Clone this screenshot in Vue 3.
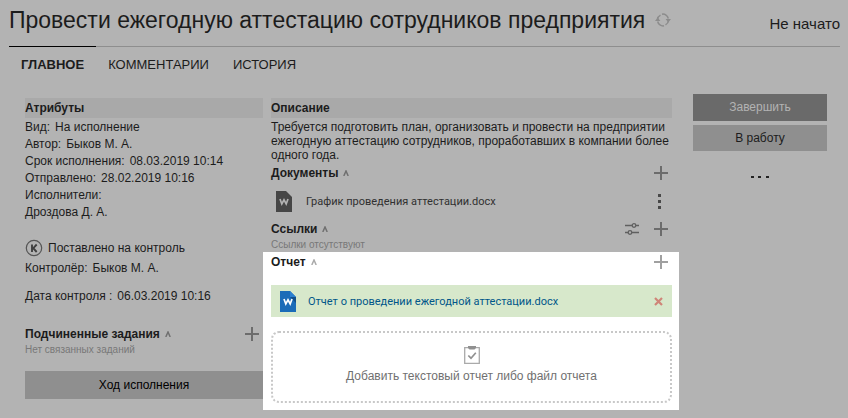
<script setup>
import { ref } from 'vue'

const tabs = ['Главное', 'Комментарии', 'История']
const active = ref(0)
const attributes = [
  ['Вид:', 'На исполнение'],
  ['Автор:', 'Быков М. А.'],
  ['Срок исполнения:', '08.03.2019 10:14'],
  ['Отправлено:', '28.02.2019 10:16'],
  ['Исполнители:', ''],
]
</script>

<template>
  <div class="page">
    <header class="top">
      <h1>Провести ежегодную аттестацию сотрудников предприятия</h1>
      <button class="icon refresh" type="button" aria-label="Обновить">
        <svg width="16" height="14" viewBox="0 0 16 14" fill="none" stroke="#8c8c8c" stroke-width="1.500">
          <path d="M2.500 6.500a5.500 5.500 0 0 1 3-4.400M7 1.200a5.500 5.500 0 0 1 6.300 4.300M13.500 7.500a5.500 5.500 0 0 1-3 4.400M9 12.800a5.500 5.500 0 0 1-6.300-4.300" />
          <path d="M0 8l2.700-3.500L5.400 8zM10.600 6l2.700 3.500L16 6z" fill="#8c8c8c" stroke="none" />
        </svg>
      </button>
      <span class="status">Не начато</span>
    </header>

    <nav class="tabs">
      <button
        v-for="(tab, i) in tabs"
        :key="tab"
        type="button"
        :class="['tab', { active: i === active }]"
        @click="active = i"
      >{{ tab }}</button>
    </nav>

    <main class="columns">
      <section class="left">
        <h2 class="band">Атрибуты</h2>
        <div class="attributes">
          <p v-for="[name, value] in attributes" :key="name"><span>{{ name }}</span><span>{{ value }}</span></p>
          <p>Дроздова Д. А.</p>
        </div>
        <p class="control">
          <svg width="18" height="18" viewBox="0 0 18 18" fill="none" stroke="#555">
            <circle cx="9" cy="9" r="7.700" stroke-width="1.200" />
            <path d="M7 5.500v7.500M11.700 5.500L8.300 9.200l3.400 3.800" stroke="#404040" stroke-width="1.900" />
          </svg>
          Поставлено на контроль
        </p>
        <p class="line"><span>Контролёр:</span><span>Быков М. А.</span></p>
        <p class="line date"><span>Дата контроля :</span><span>06.03.2019 10:16</span></p>
        <div class="section-head tasks">
          <h2>Подчиненные задания</h2>
          <svg class="caret" width="6" height="6" viewBox="0 0 6 6"><path d="M.8 6L3 1 5.200 6" /></svg>
          <button class="icon plus" type="button" aria-label="Добавить задание">
            <svg width="14" height="14" viewBox="0 0 14 14"><path d="M7 0v14M0 7h14" /></svg>
          </button>
        </div>
        <p class="note">Нет связанных заданий</p>
        <button class="btn progress" type="button">Ход исполнения</button>
      </section>

      <div class="middle">
        <section class="details">
          <h2 class="band">Описание</h2>
          <p class="description">Требуется подготовить план, организовать и провести на предприятии ежегодную аттестацию сотрудников, проработавших в компании более одного года.</p>
          <div class="section-head">
            <h2>Документы</h2>
            <svg class="caret" width="6" height="6" viewBox="0 0 6 6"><path d="M.8 6L3 1 5.200 6" /></svg>
            <button class="icon plus" type="button" aria-label="Добавить документ">
              <svg width="14" height="14" viewBox="0 0 14 14"><path d="M7 0v14M0 7h14" /></svg>
            </button>
          </div>
          <div class="file">
            <svg width="16" height="21" viewBox="0 0 16 21">
              <path d="M0 0h10l6 6v15H0z" fill="#464646" />
              <path d="M4 8l1.800 5L8 8.800l2.200 4.200L12 8" fill="none" stroke="#b3b3b3" stroke-width="1.700" />
            </svg>
            <a href="#">График проведения аттестации.docx</a>
            <button class="icon more" type="button" aria-label="Действия">
              <svg width="3" height="15" viewBox="0 0 3 15" fill="#484848"><path d="M0 0h3v3H0zM0 6h3v3H0zM0 12h3v3H0z" /></svg>
            </button>
          </div>
          <div class="section-head">
            <h2>Ссылки</h2>
            <svg class="caret" width="6" height="6" viewBox="0 0 6 6"><path d="M.8 6L3 1 5.200 6" /></svg>
            <button class="icon filter" type="button" aria-label="Настроить">
              <svg width="14" height="12" viewBox="0 0 14 12" fill="none" stroke="#606060" stroke-width="1.300">
                <path d="M0 2.500h7M11 2.500h3M0 9.500h3M7 9.500h7" />
                <circle cx="9" cy="2.500" r="1.800" /><circle cx="5" cy="9.500" r="1.800" />
              </svg>
            </button>
            <button class="icon plus" type="button" aria-label="Добавить ссылку">
              <svg width="14" height="14" viewBox="0 0 14 14"><path d="M7 0v14M0 7h14" /></svg>
            </button>
          </div>
          <p class="note">Ссылки отсутствуют</p>
        </section>

        <section class="report">
          <div class="section-head">
            <h2>Отчет</h2>
            <svg class="caret" width="6" height="6" viewBox="0 0 6 6"><path d="M.8 6L3 1 5.200 6" /></svg>
            <button class="icon plus" type="button" aria-label="Добавить отчет">
              <svg width="14" height="14" viewBox="0 0 14 14"><path d="M7 0v14M0 7h14" /></svg>
            </button>
          </div>
          <div class="file attached">
            <svg width="16" height="21" viewBox="0 0 16 21">
              <path d="M0 0h10l6 6v15H0z" fill="#1b6cb8" />
              <path d="M10 0l6 6h-6z" fill="#2b7fd0" />
              <path d="M10 6h6v6z" fill="#114e8c" />
              <path d="M4 8l1.800 5L8 8.800l2.200 4.200L12 8" fill="none" stroke="#fff" stroke-width="1.700" />
            </svg>
            <a href="#">Отчет о проведении ежегодной аттестации.docx</a>
            <button class="icon remove" type="button" aria-label="Удалить">
              <svg width="9" height="9" viewBox="0 0 9 9"><path d="M1 1l7 7M8 1L1 8" stroke="#cf8578" stroke-width="2.200" /></svg>
            </button>
          </div>
          <button class="drop" type="button">
            <svg width="16" height="18" viewBox="0 0 16 18" fill="none">
              <path d="M.7 1.700h14.600v15.600H.7z" stroke="#aaa" stroke-width="1.300" />
              <path d="M4 0h8v2l-1.500 1.500h-5L4 2z" fill="#909090" />
              <path d="M4.300 9.500l2.700 2.700 4.800-5.400" stroke="#909090" stroke-width="1.700" />
            </svg>
            <span>Добавить текстовый отчет либо файл отчета</span>
          </button>
        </section>
      </div>

      <aside class="actions">
        <button class="btn finish" type="button">Завершить</button>
        <button class="btn start" type="button">В работу</button>
        <button class="icon dots" type="button" aria-label="Ещё">
          <svg width="18" height="3" viewBox="0 0 18 3" fill="#222"><path d="M0 0h3v2H0zM7 0h3v2H7zM15 0h3v2h-3z" /></svg>
        </button>
      </aside>
    </main>
  </div>
</template>

<style>
body {
  margin: 0;
  background: #b3b3b3;
}
</style>

<style scoped>
.page {
  box-sizing: border-box;
  min-height: 100vh;
  background: #b3b3b3;
  color: #1c1c1c;
  font: 12px/17px "Liberation Sans", Arial, sans-serif;
}
h1, h2, p { margin: 0; }
button { font: inherit; color: inherit; cursor: pointer; }
svg { display: block; flex: none; }
.icon { padding: 0; border: 0; background: none; }
.top {
  display: flex;
  align-items: center;
  height: 46px;
  margin: 0 8px 0 9px;
}
h1 {
  font-size: 23px;
  line-height: 40px;
  font-weight: 400;
  padding-bottom: 6px;
}
.refresh { margin: 0 0 6px 10px; }
.status { margin-left: auto; font-size: 15px; }
.tabs {
  display: flex;
  margin: 0 8px 0 9px;
  border-top: 1px solid #8e8e8e;
}
.tab {
  margin-top: -1px;
  padding: 9px 12px 8px;
  border: 0;
  border-top: 1px solid transparent;
  background: none;
  font-size: 13px;
  line-height: 17px;
  text-transform: uppercase;
}
.tab.active { border-top-color: #000; font-weight: 700; }
.columns {
  display: grid;
  grid-template-columns: minmax(0, 238fr) minmax(0, 430fr) 134px;
  padding: 13px 21px 8px 25px;
}
.left, .middle { padding-top: 4px; }
.middle { margin-right: 14px; }
h2 { font-size: 12px; line-height: 20px; font-weight: 700; }
.band { background: #a9a9a9; }
.attributes { padding-top: 1px; }
.attributes span + span, .line span + span { margin-left: 5px; }
.control { display: flex; align-items: center; gap: 5px; margin-top: 18px; }
.line { margin-top: 3px; }
.date { margin-top: 11px; }
.section-head { display: flex; align-items: center; }
.caret { margin-left: 5px; fill: none; stroke: #707070; stroke-width: 1.500; }
.plus { margin: 0 4px 0 auto; }
.plus svg { stroke: #6c6c6c; stroke-width: 2; }
.tasks { margin-top: 19px; }
.note { font-size: 10px; line-height: 11px; color: #787878; }
.btn { display: block; width: 100%; padding: 0; border: 0; background: #8f8f8f; line-height: 28px; }
.progress { margin-top: 16px; color: #000; }
.details { padding: 0 7px 0 8px; }
.description { padding: 2px 0 1px; line-height: 14px; }
.file { display: flex; align-items: center; height: 36px; padding: 0 11px 0 5px; font: 11px/17px Roboto, sans-serif; }
.file a { margin-left: 14px; color: #303030; text-decoration: none; }
.file .more, .file .remove { margin-left: auto; }
.filter { margin-left: auto; }
.filter + .plus { margin-left: 15px; }
.report { margin-top: 2px; padding: 0 7px 7px 8px; background: #fff; }
.report .plus svg { stroke: #a0a0a0; }
.report .caret { stroke: #aaa; }
.attached { height: 32px; margin-top: 13px; padding: 0 9px; background: #d7e8cb; }
.file.attached a { margin-left: 12px; color: #005689; }
.drop {
  display: flex;
  flex-direction: column;
  align-items: center;
  gap: 4px;
  width: 100%;
  margin-top: 14px;
  padding: 13px 0 16px;
  border: 2px dotted #c8c8c8;
  border-radius: 8px;
  background: #fff;
  color: #707070;
}
.actions { display: flex; flex-direction: column; align-items: center; }
.finish { background: #6a6a6a; color: #b3b3b3; line-height: 27px; }
.start { margin-top: 4px; line-height: 26px; }
.dots { margin-top: 25px; }
</style>
